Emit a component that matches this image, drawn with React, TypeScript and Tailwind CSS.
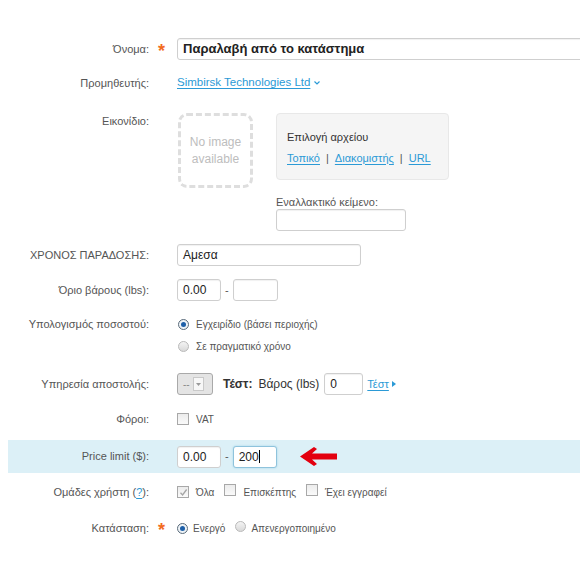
import React from 'react';

const font = { fontFamily: '"Liberation Sans", Arial, sans-serif' };

const Label = ({ children }: { children: React.ReactNode }) => (
	<div className="w-[141px] shrink-0 text-right text-[11px] text-[#555]">{children}</div>
);

const Star = ({ show }: { show?: boolean }) => (
	<div className="w-[28px] shrink-0 pl-[9px] pt-[4px] text-[18px] leading-none font-bold text-[#f26b21]">{show ? '*' : ''}</div>
);

const TextInput = ({ value, className = '', focus }: { value?: string; className?: string; focus?: boolean }) => (
	<div
		className={`h-[22px] rounded-[3px] border bg-white px-[5px] text-[12px] leading-[20px] text-[#222] ${
			focus ? 'border-[#8fc3dc] shadow-[0_0_2px_#9ed0e6]' : 'border-[#cfcfcf] shadow-[inset_0_1px_1px_rgba(0,0,0,0.06)]'
		} ${className}`}
	>
		{value}
		{focus && <span className="inline-block h-[13px] w-px translate-y-[2px] bg-black" />}
	</div>
);

const Radio = ({ on }: { on?: boolean }) => (
	<span
		className={`inline-flex h-[11px] w-[11px] shrink-0 items-center justify-center rounded-full border ${
			on ? 'border-[#5a6b7a] bg-[#eef3f7]' : 'border-[#b9b9b9] bg-[linear-gradient(#f4f4f4,#d9d9d9)]'
		}`}
	>
		{on && <span className="h-[5px] w-[5px] rounded-full bg-[#1d5fa8]" />}
	</span>
);

const Check = ({ checked }: { checked?: boolean }) => (
	<span className="inline-flex h-[12px] w-[12px] shrink-0 items-center justify-center border border-[#a8a8a8] bg-[linear-gradient(#ececec,#fafafa)]">
		{checked && (
			<svg width="9" height="9" viewBox="0 0 9 9">
				<path d="M1.5 4.8 L3.6 7 L7.6 1.5" fill="none" stroke="#a5a5a5" strokeWidth="1.3" />
			</svg>
		)}
	</span>
);

const Link = ({ children }: { children: React.ReactNode }) => (
	<span className="text-[#2b9ad6] underline underline-offset-2">{children}</span>
);

export default function App() {
	return (
		<div className="h-[580px] w-[580px] overflow-hidden bg-white pl-[8px] pt-[28px]" style={font}>
			{/* Name */}
			<div className="flex h-[42px] items-center">
				<Label>Όνομα:</Label>
				<Star show />
				<TextInput value="Παραλαβή από το κατάστημα" className="w-[440px] shrink-0 text-[13px] font-bold text-[#222]" />
			</div>

			{/* Supplier */}
			<div className="flex h-[26px] items-center">
				<Label>Προμηθευτής:</Label>
				<Star />
				<span className="text-[11.5px]">
					<Link>Simbirsk Technologies Ltd</Link>
				</span>
				<svg className="ml-[4px]" width="6" height="4" viewBox="0 0 6 4">
					<path d="M0.5 0.5 L3 3 L5.5 0.5" fill="none" stroke="#2b9ad6" strokeWidth="1.2" />
				</svg>
			</div>

			{/* Icon */}
			<div className="flex h-[140px] pt-[17px]">
				<Label>Εικονίδιο:</Label>
				<Star />
				<div className="flex items-start gap-[23px] pl-[1px]">
					<div className="flex h-[75px] w-[75px] items-center justify-center rounded-[9px] border-[3px] border-dashed border-[#dedede] text-center text-[12px] leading-[17px] text-[#bdbdbd]">
						No image
						<br />
						available
					</div>
					<div className="flex flex-col">
						<div className="h-[67px] w-[173px] rounded-[4px] border border-[#e8e8e8] bg-[#f5f5f5] pl-[10px] pt-[15px] text-[11px]">
							<div className="text-[#333]">Επιλογή αρχείου</div>
							<div className="mt-[4px] text-[#555]">
								<Link>Τοπικό</Link>
								<span className="mx-[6px]">|</span>
								<Link>Διακομιστής</Link>
								<span className="mx-[6px]">|</span>
								<Link>URL</Link>
							</div>
						</div>
						<div className="mt-[16px] text-[11px] leading-[13px] text-[#555]">Εναλλακτικό κείμενο:</div>
						<TextInput className="w-[130px]" />
					</div>
				</div>
			</div>

			{/* Delivery time */}
			<div className="flex h-[38px] items-center">
				<Label>ΧΡΟΝΟΣ ΠΑΡΑΔΟΣΗΣ:</Label>
				<Star />
				<TextInput value="Αμεσα" className="w-[184px]" />
			</div>

			{/* Weight limit */}
			<div className="flex h-[32px] items-center">
				<Label>Όριο βάρους (lbs):</Label>
				<Star />
				<TextInput value="0.00" className="w-[44px]" />
				<span className="mx-[4px] text-[11px] text-[#555]">-</span>
				<TextInput className="w-[45px]" />
			</div>

			{/* Rate calculation */}
			<div className="flex h-[56px] pt-[7px]">
				<div className="flex h-[22px] items-center">
					<Label>Υπολογισμός ποσοστού:</Label>
				</div>
				<Star />
				<div className="flex flex-col pl-[1px] text-[10px] text-[#555]">
					<div className="flex h-[22px] items-center gap-[7px]">
						<Radio on />
						Εγχειρίδιο (βάσει περιοχής)
					</div>
					<div className="flex h-[22px] items-center gap-[7px]">
						<Radio />
						Σε πραγματικό χρόνο
					</div>
				</div>
			</div>

			{/* Shipping service */}
			<div className="flex h-[44px] items-center">
				<Label>Υπηρεσία αποστολής:</Label>
				<Star />
				<div className="flex h-[22px] w-[36px] items-center gap-[3px] rounded-[3px] border border-[#a9a9a9] bg-[#e4e4e4] pl-[5px]">
					<span className="text-[10px] text-[#888]">--</span>
					<span className="flex h-[14px] w-[11px] items-center justify-center border border-[#c9c9c9] bg-[#f7f7f7]">
						<svg width="5" height="3" viewBox="0 0 5 3">
							<path d="M0 0 H5 L2.5 3 Z" fill="#999" />
						</svg>
					</span>
				</div>
				<span className="ml-[10px] text-[12px] font-bold text-[#333]">Τέστ:</span>
				<span className="ml-[6px] text-[12px] text-[#333]">Βάρος (lbs)</span>
				<TextInput value="0" className="ml-[5px] w-[39px]" />
				<span className="ml-[4px] text-[11px]">
					<Link>Τέστ</Link>
				</span>
				<svg className="ml-[3px]" width="4" height="6" viewBox="0 0 4 6">
					<path d="M0 0 L4 3 L0 6 Z" fill="#2b9ad6" />
				</svg>
			</div>

			{/* Taxes */}
			<div className="flex h-[26px] items-center">
				<Label>Φόροι:</Label>
				<Star />
				<Check />
				<span className="ml-[7px] text-[10px] text-[#555]">VAT</span>
			</div>

			{/* Price limit */}
			<div className="mt-[8px] flex h-[33px] items-center bg-[#dcf0f7]">
				<Label>Price limit ($):</Label>
				<Star />
				<TextInput value="0.00" className="w-[44px]" />
				<span className="mx-[4px] text-[11px] text-[#555]">-</span>
				<TextInput value="200" className="w-[44px]" focus />
				<svg className="ml-[22px]" width="38" height="19" viewBox="0 0 38 19">
					<path d="M38 6.5 H13 L18 2 L15 0 L1 9.5 L15 19 L18 17 L13 12.5 H38 Z" fill="#e3000f" />
				</svg>
			</div>

			{/* User groups */}
			<div className="flex h-[38px] items-center">
				<Label>
					Ομάδες χρήστη (<Link>?</Link>):
				</Label>
				<Star />
				<div className="flex items-center text-[10px] text-[#555]">
					<Check checked />
					<span className="ml-[7px]">Όλα</span>
					<span className="ml-[10px]">
						<Check />
					</span>
					<span className="ml-[7px]">Επισκέπτης</span>
					<span className="ml-[10px]">
						<Check />
					</span>
					<span className="ml-[7px]">Έχει εγγραφεί</span>
				</div>
			</div>

			{/* Status */}
			<div className="flex h-[34px] items-center">
				<Label>Κατάσταση:</Label>
				<Star show />
				<div className="flex items-center text-[10px] text-[#555]">
					<Radio on />
					<span className="ml-[5px]">Ενεργό</span>
					<span className="ml-[10px]">
						<Radio />
					</span>
					<span className="ml-[5px]">Απενεργοποιημένο</span>
				</div>
			</div>
		</div>
	);
}
